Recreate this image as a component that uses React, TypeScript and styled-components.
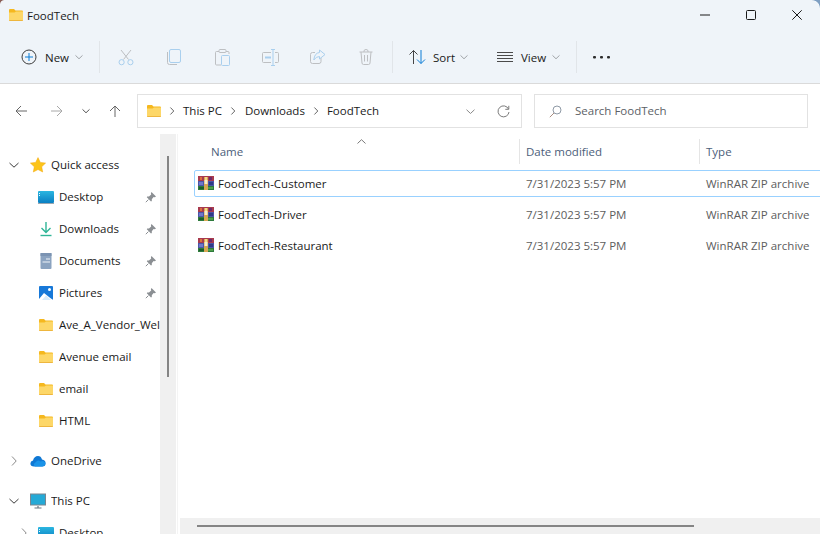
import React from 'react'
import styled, { createGlobalStyle } from 'styled-components'

const GlobalStyle = createGlobalStyle`
  html, body {
    margin: 0;
    padding: 0;
    background: #fff;
  }
  body {
    font-family: 'Open Sans', 'Noto Sans', sans-serif;
    font-size: 11.5px;
    color: #1a1a1a;
  }
`

const Window = styled.div`
  width: 820px;
  height: 534px;
  display: flex;
  flex-direction: column;
  position: relative;
  overflow: hidden;
  background: #fff;
`

const CornerLeft = styled.div`
  position: absolute;
  left: 0;
  top: 0;
  width: 4px;
  height: 4px;
  background: radial-gradient(circle at 100% 100%, transparent 3.4px, #8a5f58 4.2px);
`

const CornerRight = styled.div`
  position: absolute;
  right: 0;
  top: 0;
  width: 8px;
  height: 8px;
  background: radial-gradient(circle at 0 100%, transparent 7.4px, #7e9fc2 8.2px);
`

const Header = styled.header`
  background: #eff4f9;
  border-bottom: 1px solid #dadada;
`

const TitleBar = styled.div`
  height: 30px;
  display: flex;
  align-items: center;
  padding-left: 9px;
`

const TitleText = styled.span`
  margin-left: 4px;
  flex: 1;
`

const WinButton = styled.div`
  width: 46px;
  height: 30px;
  display: flex;
  align-items: center;
  justify-content: center;
`

const Toolbar = styled.div`
  height: 53px;
  box-sizing: border-box;
  padding: 1px 0 0 21px;
  display: flex;
  align-items: center;
`

const Separator = styled.div`
  width: 1px;
  height: 32px;
  background: #e1e5e9;
  flex-shrink: 0;
`

const LabelButton = styled.div<{ $width: number; $gap: number; $inset?: number }>`
  width: ${({ $width }) => $width}px;
  box-sizing: border-box;
  padding-left: ${({ $inset }) => $inset ?? 0}px;
  display: flex;
  align-items: center;
  gap: ${({ $gap }) => $gap}px;
  flex-shrink: 0;
`

const ToolChevron = styled.span`
  display: flex;
  margin-left: -2px;
`

const IconGroup = styled.div`
  display: flex;
  padding: 0 2px;
`

const IconButton = styled.div`
  width: 48px;
  display: flex;
  justify-content: center;
  flex-shrink: 0;
`

const MoreButton = styled.div`
  margin-left: 16px;
`

const AddressRow = styled.div`
  height: 50px;
  box-sizing: border-box;
  padding-top: 10px;
  display: flex;
  align-items: flex-start;
`

const NavButtons = styled.div`
  width: 137px;
  height: 34px;
  display: grid;
  grid-template-columns: 42px 30px 28px 30px;
  align-items: center;
  justify-items: center;
`

const Field = styled.div<{ $width: number; $inset: number; $offset?: number }>`
  width: ${({ $width }) => $width}px;
  height: 34px;
  box-sizing: border-box;
  margin-left: ${({ $offset }) => $offset ?? 0}px;
  padding-left: ${({ $inset }) => $inset}px;
  border: 1.5px solid #e2e2e2;
  display: flex;
  align-items: center;
`

const Crumb = styled.span`
  color: #1a1a1a;
  margin-top: -1px;
`

const CrumbSep = styled.span<{ $width: number }>`
  display: flex;
  width: ${({ $width }) => $width}px;
  justify-content: center;
`

const FieldTools = styled.div`
  margin-left: auto;
  display: grid;
  grid-template-columns: 33px 33px;
  justify-items: center;
  align-items: center;
  margin-right: 1px;
`

const SearchText = styled.span`
  margin-left: 13px;
  margin-top: -1px;
  color: #5c6166;
`

const Main = styled.main`
  flex: 1;
  min-height: 0;
  display: flex;
`

const Sidebar = styled.nav`
  width: 160px;
  flex-shrink: 0;
  padding-top: 15px;
  overflow: hidden;
`

const TreeRow = styled.div<{ $level: number; $gapBefore?: boolean }>`
  height: 32px;
  display: flex;
  align-items: center;
  position: relative;
  white-space: nowrap;
  padding-left: ${({ $level }) => ($level === 0 ? 30 : 38)}px;
  margin-top: ${({ $gapBefore }) => ($gapBefore ? 8 : 0)}px;
`

const Expander = styled.span<{ $level: number }>`
  position: absolute;
  left: ${({ $level }) => ($level === 0 ? 9 : 19)}px;
  top: 11px;
  display: flex;
`

const TreeIcon = styled.span`
  width: 16px;
  display: flex;
  justify-content: center;
  flex-shrink: 0;
`

const TreeLabel = styled.span`
  margin-left: 5px;
  margin-top: -2px;
  overflow: hidden;
  flex: 1;
`

const PinSlot = styled.span`
  position: absolute;
  left: 145px;
  top: 10px;
  display: flex;
`

const VScroll = styled.div`
  width: 16px;
  flex-shrink: 0;
  background: #f0f0f0;
  padding: 22px 7px 0;
  box-sizing: border-box;
`

const VThumb = styled.div`
  width: 2px;
  height: 221px;
  background: #858585;
`

const PaneRule = styled.div`
  width: 1px;
  margin-left: 1px;
  margin-right: 2px;
  flex-shrink: 0;
  background: #f4f4f4;
`

const FilePane = styled.section`
  flex: 1;
  min-width: 0;
  display: flex;
  flex-direction: column;
  position: relative;
  overflow: hidden;
`

const SortCaret = styled.span`
  position: absolute;
  left: 177px;
  top: 3px;
  display: flex;
`

const ListArea = styled.div`
  flex: 1;
  padding-top: 5px;
`

const ColumnHeader = styled.div`
  height: 25px;
  display: grid;
  grid-template-columns: 340px 180px 1fr;
  margin-bottom: 6px;
`

const ColumnCell = styled.div<{ $inset: number; $rule?: boolean }>`
  display: flex;
  align-items: center;
  padding-left: ${({ $inset }) => $inset}px;
  color: #4c607a;
  border-left: ${({ $rule }) => ($rule ? '1px solid #e5e5e5' : 'none')};
  margin-left: ${({ $rule }) => ($rule ? -1 : 0)}px;
`

const FileRow = styled.div<{ $selected?: boolean }>`
  height: 27px;
  box-sizing: border-box;
  margin: 0 -6px 4px 14px;
  display: grid;
  grid-template-columns: 326px 180px 1fr;
  align-items: center;
  border: 1px solid ${({ $selected }) => ($selected ? '#99d1ff' : 'transparent')};
  border-radius: 2px;
`

const NameCell = styled.div`
  display: flex;
  align-items: center;
  gap: 4px;
  padding-left: 3px;
  margin-top: -1px;
`

const MetaCell = styled.div`
  color: #5d5d5d;
  white-space: nowrap;
  margin-left: 5px;
`

const HScroll = styled.div`
  height: 16px;
  background: #f0f0f0;
  padding: 7px 0 0 17px;
  box-sizing: border-box;
`

const HThumb = styled.div`
  width: 497px;
  height: 2px;
  background: #858585;
`

const Svg = ({ w, h, children }: { w: number; h: number; children: React.ReactNode }) => (
  <svg
    width={w}
    height={h}
    viewBox={`0 0 ${w} ${h}`}
    fill='none'
    style={{ display: 'block', flexShrink: 0 }}
  >
    {children}
  </svg>
)

const FolderIcon = () => (
  <Svg w={14} h={12}>
    <path d='M0 1 Q0 0 1 0 H5 L6.5 1.5 H13 Q14 1.5 14 2.5 V5 H0 Z' fill='#f5b81f' />
    <path d='M0 3.5 H5.5 L7 2.5 H14 V11 Q14 12 13 12 H1 Q0 12 0 11 Z' fill='#fdd768' />
    <path d='M0 11 H14 Q14 12 13 12 H1 Q0 12 0 11 Z' fill='#eeb63e' />
  </Svg>
)

const Chevron = ({ color = '#a0a4a8', dir = 'down', size = 8 }: { color?: string; dir?: 'down' | 'right' | 'up'; size?: number }) => (
  <Svg w={size} h={size}>
    {dir === 'down' && <path d={`M.5 ${size * 0.3} L${size / 2} ${size * 0.72} L${size - 0.5} ${size * 0.3}`} stroke={color} />}
    {dir === 'up' && <path d={`M.5 ${size * 0.72} L${size / 2} ${size * 0.3} L${size - 0.5} ${size * 0.72}`} stroke={color} />}
    {dir === 'right' && <path d={`M${size * 0.3} .5 L${size * 0.72} ${size / 2} L${size * 0.3} ${size - 0.5}`} stroke={color} />}
  </Svg>
)

const RarIcon = () => (
  <Svg w={16} h={14}>
    <rect x='0' y='0' width='16' height='5' fill='#a83a4e' />
    <rect x='2' y='1' width='2' height='3' fill='#d9703f' />
    <rect x='11' y='1' width='3' height='3' fill='#6d2a6a' />
    <rect x='0' y='5' width='16' height='5' fill='#4b55a6' />
    <rect x='1' y='6' width='4' height='3' fill='#6f78c9' />
    <rect x='11' y='6' width='4' height='3' fill='#2f3a86' />
    <rect x='0' y='10' width='16' height='4' fill='#2e7a3c' />
    <rect x='1' y='11' width='5' height='2' fill='#1a5f2a' />
    <rect x='10' y='11' width='5' height='2' fill='#4fa04a' />
    <rect x='6' y='1' width='4' height='13' fill='#d8a854' />
    <rect x='6.5' y='4' width='3' height='4' fill='#f6ecd0' />
    <rect x='7' y='1' width='2' height='3' fill='#f4d98c' />
  </Svg>
)

const PinIcon = () => (
  <Svg w={12} h={12}>
    <path d='M6.5 1 L11 5.5 L9.8 6.2 L8.6 6 L6.8 8.2 L6.8 10 L6 10.4 L1.8 6.2 L2.2 5.4 L4 5.4 L6.2 3.6 L5.9 2.2 Z' fill='#8b8f93' />
    <path d='M3.4 8.6 L.8 11.2' stroke='#8b8f93' />
  </Svg>
)

const Star = () => (
  <Svg w={16} h={16}>
    <path d='M8 .6 L10.3 5.4 L15.6 6.1 L11.7 9.8 L12.7 15 L8 12.5 L3.3 15 L4.3 9.8 L.4 6.1 L5.7 5.4 Z' fill='#fcc419' stroke='#f2a60c' strokeWidth='.5' />
  </Svg>
)

const DesktopIcon = ({ id }: { id: string }) => (
  <Svg w={16} h={13}>
    <defs>
      <linearGradient id={id} x1='0' y1='0' x2='0' y2='1'>
        <stop offset='0' stopColor='#2bb6e0' />
        <stop offset='1' stopColor='#0a7fc2' />
      </linearGradient>
    </defs>
    <rect x='0' y='0' width='16' height='12' rx='1' fill={`url(#${id})`} />
    <rect x='0' y='12' width='16' height='1' fill='#9ba7b0' />
    <rect x='1' y='2' width='1' height='1' fill='#e6f7ff' />
    <rect x='1' y='4' width='1' height='1' fill='#e6f7ff' />
  </Svg>
)

const DownloadIcon = () => (
  <Svg w={16} h={16}>
    <path d='M8 1 V11 M3.5 7 L8 11.5 L12.5 7' stroke='#2fb597' strokeWidth='1.4' />
    <path d='M2.5 14.5 H13.5' stroke='#2fb597' strokeWidth='1.4' />
  </Svg>
)

const DocumentsIcon = () => (
  <Svg w={16} h={16}>
    <rect x='2.5' y='0' width='11' height='16' rx='1' fill='#8ba3c0' />
    <rect x='2.5' y='0' width='11' height='3' fill='#7b93b2' />
    <path d='M8 6 H12 M4.5 9 H12' stroke='#eef3f8' />
  </Svg>
)

const PicturesIcon = () => (
  <Svg w={16} h={16}>
    <rect x='1' y='1' width='14' height='14' rx='1' fill='#1778d8' />
    <circle cx='11.5' cy='4.5' r='1.5' fill='#fff' />
    <path d='M1 14 L6 8 L11 12 L15 15 H1 Z' fill='#fff' />
    <path d='M4 15 L8 10.5 L13 15 Z' fill='#d9ecfb' />
  </Svg>
)

const CloudIcon = () => (
  <Svg w={16} h={12}>
    <path d='M4 11.5 Q.4 11.5 .4 8.5 Q.4 6 3 5.6 Q4.2 1 8 1 Q11 1 12 4.4 Q15.6 4.8 15.6 8.2 Q15.6 11.5 12.4 11.5 Z' fill='#0f78d4' />
    <path d='M5 11.5 Q2.4 9 5.6 7.2 Q7.8 4.4 10.4 6.4 Q13.4 5.4 15.2 7.4 Q16 10 12.4 11.5 Z' fill='#1a93e8' />
  </Svg>
)

const MonitorIcon = () => (
  <Svg w={16} h={16}>
    <rect x='.5' y='1' width='15' height='11' fill='#25a9d6' stroke='#7a8690' />
    <path d='M8 13 V15 M4.5 15 H11.5' stroke='#6b7780' strokeWidth='1.2' />
  </Svg>
)

const faint = '#a9cfee'
const faintGrey = '#bdbfc2'

const CutIcon = () => (
  <Svg w={16} h={17}>
    <path d='M3 1 L10.5 10.5 M13 1 L5.5 10.5' stroke={faintGrey} />
    <circle cx='3.6' cy='13.2' r='2.6' stroke={faint} />
    <circle cx='12.4' cy='13.2' r='2.6' stroke={faint} />
  </Svg>
)

const CopyIcon = () => (
  <Svg w={14} h={16}>
    <rect x='2.5' y='.5' width='11' height='13' rx='1.5' stroke={faint} />
    <path d='M.5 3 V13.5 Q.5 15.5 2.5 15.5 H10' stroke={faintGrey} />
  </Svg>
)

const PasteIcon = () => (
  <Svg w={15} h={17}>
    <path d='M4 2.5 H1.5 Q.5 2.5 .5 3.5 V15 Q.5 16 1.5 16 H6 M11 2.5 H13 Q14 2.5 14 3.5 V5' stroke={faintGrey} />
    <rect x='4' y='.5' width='7' height='3' rx='1' stroke={faintGrey} />
    <rect x='6.5' y='6.5' width='8' height='10' rx='1' stroke={faint} />
  </Svg>
)

const RenameIcon = () => (
  <Svg w={17} h={17}>
    <path d='M9 3.5 H1.5 Q.5 3.5 .5 4.5 V12.5 Q.5 13.5 1.5 13.5 H9 M13 3.5 H15.5 Q16.5 3.5 16.5 4.5 V12.5 Q16.5 13.5 15.5 13.5 H13' stroke={faintGrey} />
    <path d='M9 .5 H13 M11 .5 V16.5 M9 16.5 H13' stroke={faint} />
    <path d='M3 8.5 H9' stroke={faint} strokeWidth='2' />
  </Svg>
)

const ShareIcon = () => (
  <Svg w={16} h={15}>
    <path d='M11 9 V12.5 Q11 14.5 9 14.5 H2.5 Q.5 14.5 .5 12.5 V5.5 Q.5 3.5 2.5 3.5 H5' stroke={faintGrey} />
    <path d='M9.5 1 L15 5.5 L9.5 10 V7.5 Q6 7.5 3.8 11 Q4.5 4 9.5 3.5 Z' stroke={faint} />
  </Svg>
)

const TrashIcon = () => (
  <Svg w={14} h={16}>
    <path d='M.5 3 H13.5 M5 3 V2 Q5 .5 7 .5 Q9 .5 9 2 V3 M2 3 L3 14 Q3.1 15.5 4.5 15.5 H9.5 Q10.9 15.5 11 14 L12 3 M5.5 6 V12.5 M8.5 6 V12.5' stroke={faintGrey} />
  </Svg>
)

const PlusIcon = () => (
  <Svg w={16} h={16}>
    <circle cx='8' cy='8' r='7' stroke='#3d3d3d' strokeWidth='1' />
    <path d='M8 4 V12 M4 8 H12' stroke='#0a7cd6' strokeWidth='1' />
  </Svg>
)

const SortIcon = () => (
  <Svg w={17} h={16}>
    <path d='M4.5 15 V1.5 M.5 5.5 L4.5 1.5 L8.5 5.5' stroke='#454545' />
    <path d='M12 1 V14.5 M8 10.5 L12 14.5 L16 10.5' stroke='#0a7cd6' />
  </Svg>
)

const ViewIcon = () => (
  <Svg w={16} h={11}>
    <path d='M0 .5 H16 M0 3.5 H16 M0 6.5 H16 M0 9.5 H16' stroke='#4a4a4a' />
  </Svg>
)

const DotsIcon = () => (
  <Svg w={17} h={4}>
    <rect x='0' y='1' width='3' height='2.4' rx='1' fill='#2b2b2b' />
    <rect x='7' y='1' width='3' height='2.4' rx='1' fill='#2b2b2b' />
    <rect x='14' y='1' width='3' height='2.4' rx='1' fill='#2b2b2b' />
  </Svg>
)

const MinIcon = () => (
  <Svg w={10} h={2}>
    <path d='M0 1 H10' stroke='#1a1a1a' />
  </Svg>
)

const MaxIcon = () => (
  <Svg w={10} h={10}>
    <rect x='.5' y='.5' width='9' height='9' rx='1' stroke='#1a1a1a' />
  </Svg>
)

const CloseIcon = () => (
  <Svg w={10} h={10}>
    <path d='M.3 .3 L9.7 9.7 M9.7 .3 L.3 9.7' stroke='#1a1a1a' />
  </Svg>
)

const ArrowIcon = ({ dir, color }: { dir: 'left' | 'right' | 'up'; color: string }) => (
  <Svg w={12} h={12}>
    {dir === 'left' && <path d='M12 6 H1 M6 1 L1 6 L6 11' stroke={color} />}
    {dir === 'right' && <path d='M0 6 H11 M6 1 L11 6 L6 11' stroke={color} />}
    {dir === 'up' && <path d='M6 12 V1 M1 6 L6 1 L11 6' stroke={color} />}
  </Svg>
)

const RefreshIcon = () => (
  <Svg w={13} h={13}>
    <path d='M11.5 4 A5.5 5.5 0 1 0 12 7' stroke='#7a7a7a' />
    <path d='M11.8 .8 V4.3 H8.3' stroke='#7a7a7a' />
  </Svg>
)

const SearchIcon = () => (
  <Svg w={13} h={13}>
    <circle cx='8' cy='5' r='4' stroke='#8f9aa6' />
    <path d='M5 8 L.8 12.2' stroke='#a98d80' />
  </Svg>
)

type TreeItem = {
  label: string
  level: number
  icon: React.ReactNode
  expand?: 'open' | 'closed'
  pin?: boolean
  gap?: boolean
}

const tree: TreeItem[] = [
  { label: 'Quick access', level: 0, icon: <Star />, expand: 'open' },
  { label: 'Desktop', level: 1, icon: <DesktopIcon id='desk-a' />, pin: true },
  { label: 'Downloads', level: 1, icon: <DownloadIcon />, pin: true },
  { label: 'Documents', level: 1, icon: <DocumentsIcon />, pin: true },
  { label: 'Pictures', level: 1, icon: <PicturesIcon />, pin: true },
  { label: 'Ave_A_Vendor_Welcome', level: 1, icon: <FolderIcon /> },
  { label: 'Avenue email', level: 1, icon: <FolderIcon /> },
  { label: 'email', level: 1, icon: <FolderIcon /> },
  { label: 'HTML', level: 1, icon: <FolderIcon /> },
  { label: 'OneDrive', level: 0, icon: <CloudIcon />, expand: 'closed', gap: true },
  { label: 'This PC', level: 0, icon: <MonitorIcon />, expand: 'open', gap: true },
  { label: 'Desktop', level: 1, icon: <DesktopIcon id='desk-b' />, expand: 'closed' },
]

const files = ['FoodTech-Customer', 'FoodTech-Driver', 'FoodTech-Restaurant']

export default function App() {
  return (
    <Window>
      <GlobalStyle />
      <Header>
        <TitleBar>
          <FolderIcon />
          <TitleText>FoodTech</TitleText>
          <WinButton><MinIcon /></WinButton>
          <WinButton><MaxIcon /></WinButton>
          <WinButton><CloseIcon /></WinButton>
        </TitleBar>
        <Toolbar>
          <LabelButton $width={78} $gap={8}>
            <PlusIcon />
            <span>New</span>
            <ToolChevron><Chevron /></ToolChevron>
          </LabelButton>
          <Separator />
          <IconGroup>
            <IconButton><CutIcon /></IconButton>
            <IconButton><CopyIcon /></IconButton>
            <IconButton><PasteIcon /></IconButton>
            <IconButton><RenameIcon /></IconButton>
            <IconButton><ShareIcon /></IconButton>
            <IconButton><TrashIcon /></IconButton>
          </IconGroup>
          <Separator />
          <LabelButton $width={104} $gap={7} $inset={16}>
            <SortIcon />
            <span>Sort</span>
            <ToolChevron><Chevron /></ToolChevron>
          </LabelButton>
          <LabelButton $width={79} $gap={8}>
            <ViewIcon />
            <span>View</span>
            <ToolChevron><Chevron /></ToolChevron>
          </LabelButton>
          <Separator />
          <MoreButton><DotsIcon /></MoreButton>
        </Toolbar>
      </Header>
      <AddressRow>
        <NavButtons>
          <ArrowIcon dir='left' color='#666' />
          <ArrowIcon dir='right' color='#a8a8a8' />
          <Chevron color='#555' />
          <ArrowIcon dir='up' color='#666' />
        </NavButtons>
        <Field $width={385} $inset={9}>
          <FolderIcon />
          <CrumbSep $width={22}><Chevron color='#666' dir='right' /></CrumbSep>
          <Crumb>This PC</Crumb>
          <CrumbSep $width={23}><Chevron color='#666' dir='right' /></CrumbSep>
          <Crumb>Downloads</Crumb>
          <CrumbSep $width={22}><Chevron color='#666' dir='right' /></CrumbSep>
          <Crumb>FoodTech</Crumb>
          <FieldTools>
            <Chevron color='#8a8a8a' size={9} />
            <RefreshIcon />
          </FieldTools>
        </Field>
        <Field $width={274} $inset={14} $offset={12}>
          <SearchIcon />
          <SearchText>Search FoodTech</SearchText>
        </Field>
      </AddressRow>
      <Main>
        <Sidebar>
          {tree.map((item, i) => (
            <TreeRow key={i} $level={item.level} $gapBefore={item.gap}>
              {item.expand && (
                <Expander $level={item.level}>
                  <Chevron
                    size={10}
                    dir={item.expand === 'open' ? 'down' : 'right'}
                    color={item.expand === 'open' ? '#3a3a3a' : '#8a8a8a'}
                  />
                </Expander>
              )}
              <TreeIcon>{item.icon}</TreeIcon>
              <TreeLabel>{item.label}</TreeLabel>
              {item.pin && <PinSlot><PinIcon /></PinSlot>}
            </TreeRow>
          ))}
        </Sidebar>
        <VScroll><VThumb /></VScroll>
        <PaneRule />
        <FilePane>
          <SortCaret><Chevron color='#7a7a7a' size={9} dir='up' /></SortCaret>
          <ListArea>
            <ColumnHeader>
              <ColumnCell $inset={31}>Name</ColumnCell>
              <ColumnCell $inset={6} $rule>Date modified</ColumnCell>
              <ColumnCell $inset={6} $rule>Type</ColumnCell>
            </ColumnHeader>
            {files.map((name, i) => (
              <FileRow key={name} $selected={i === 0}>
                <NameCell>
                  <RarIcon />
                  <span>{name}</span>
                </NameCell>
                <MetaCell>7/31/2023 5:57 PM</MetaCell>
                <MetaCell>WinRAR ZIP archive</MetaCell>
              </FileRow>
            ))}
          </ListArea>
          <HScroll><HThumb /></HScroll>
        </FilePane>
      </Main>
      <CornerLeft />
      <CornerRight />
    </Window>
  )
}
